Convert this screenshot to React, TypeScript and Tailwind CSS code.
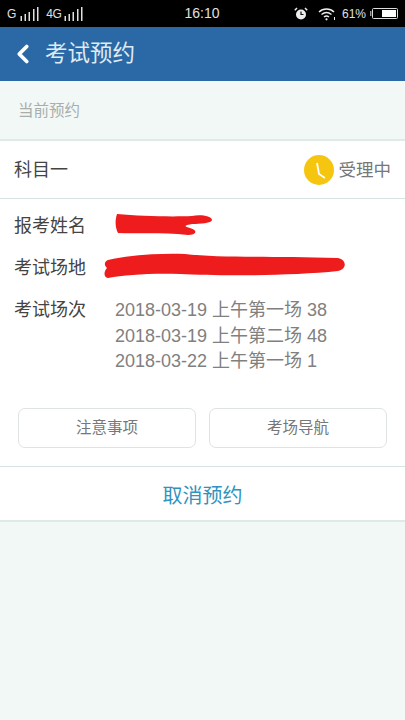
import { ChevronLeft } from 'lucide-react';

const cjk = '"Liberation Sans", "Noto Sans CJK SC", sans-serif';

function Bars() {
  return (
    <svg width="20" height="14" viewBox="0 0 20 14" fill="#e0e0e0">
      <rect x="0.5" y="9" width="1.5" height="5" />
      <rect x="4.5" y="7" width="1.5" height="7" />
      <rect x="8.5" y="5" width="1.5" height="9" />
      <rect x="13" y="2" width="1.5" height="12" />
      <rect x="17" y="0" width="1.5" height="14" />
    </svg>
  );
}

function Alarm() {
  return (
    <svg width="14" height="14" viewBox="0 0 14 14">
      <circle cx="7" cy="7.5" r="5" fill="#eee" />
      <path d="M7 4.5V7.5H9.5" stroke="#111" strokeWidth="1.2" fill="none" />
      <path d="M0.8 3.2L3 1M13.2 3.2L11 1" stroke="#eee" strokeWidth="1.5" />
    </svg>
  );
}

function Wifi() {
  return (
    <svg width="18" height="14" viewBox="0 0 18 14" fill="none" stroke="#eee" strokeWidth="1.4">
      <path d="M1 5C5 1 12 1 16 5" />
      <path d="M3.5 7.5C6.5 5 10.5 5 13.5 7.5" />
      <path d="M6 10C7.5 8.8 9.5 8.8 11 10" />
      <circle cx="8.5" cy="12.3" r="1.1" fill="#eee" stroke="none" />
      <path d="M16.5 10V13" strokeWidth="1" />
    </svg>
  );
}

function Battery() {
  return (
    <svg width="28" height="11" viewBox="0 0 28 11">
      <path d="M0.8 3V8" stroke="#ddd" strokeWidth="1" />
      <rect x="2.5" y="0.5" width="25" height="10" rx="1" fill="none" stroke="#ddd" />
      <rect x="12" y="2" width="14" height="7" fill="#fff" />
    </svg>
  );
}

function StatusBar() {
  return (
    <div className="h-[27px] bg-black flex items-center justify-between pl-[7px] pr-[7px] text-[#e0e0e0]">
      <div className="flex items-center w-[140px]">
        <span className="text-[12px] mr-[4px]">G</span>
        <Bars />
        <span className="text-[12px] ml-[6px] mr-[3px] tracking-[-0.5px]">4G</span>
        <Bars />
      </div>
      <span className="text-[14px] ml-[-1px]">16:10</span>
      <div className="flex items-center w-[140px] justify-end">
        <Alarm />
        <span className="w-[10px]" />
        <Wifi />
        <span className="text-[12px] ml-[6px] mr-[4px]">61%</span>
        <Battery />
      </div>
    </div>
  );
}

function Row({ label, children }: { label: string; children?: React.ReactNode }) {
  return (
    <div className="flex text-[18px] text-[#444] leading-[24px]">
      <span className="w-[101px] shrink-0">{label}</span>
      {children}
    </div>
  );
}

export default function App() {
  return (
    <div className="w-[405px] h-[720px] bg-[#f1f8f6] overflow-hidden" style={{ fontFamily: cjk }}>
      <StatusBar />
      <div className="h-[54px] bg-[#2a69a6] flex items-center text-[#dfeaf4]">
        <ChevronLeft className="w-[30px] h-[30px] ml-[8px] text-white" strokeWidth={3} />
        <span className="text-[22.5px] ml-[7px]">考试预约</span>
      </div>
      <div className="h-[58px] pl-[18px] pt-[2px] flex items-center text-[15.5px] text-[#a9aeac]">当前预约</div>
      <div className="bg-white border-t-2 border-b-2 border-[#dfeae8] h-[383px]">
        <div className="h-[58px] border-b border-[#d8e4e4] pl-[14px] pr-[14px] flex items-center justify-between">
          <span className="text-[18px] text-[#444] mt-[2px]">科目一</span>
          <div className="flex items-center gap-[5px]">
            <svg width="30" height="30" viewBox="0 0 30 30">
              <circle cx="15" cy="15" r="15" fill="#f6c50f" />
              <path d="M13 8L15 19L21 23" stroke="#fff" strokeWidth="1.8" fill="none" />
            </svg>
            <span className="text-[17.5px] text-[#777] mt-[2px]">受理中</span>
          </div>
        </div>
        <div className="pl-[14px] pt-[15px] relative">
          <Row label="报考姓名" />
          <div className="h-[18px]" />
          <Row label="考试场地" />
          <div className="h-[18px]" />
          <Row label="考试场次">
            <div className="text-[#808080] text-[18px] leading-[25.5px]">
              <div>2018-03-19 上午第一场 38</div>
              <div>2018-03-19 上午第二场 48</div>
              <div>2018-03-22 上午第一场 1</div>
            </div>
          </Row>
          <svg className="absolute left-[100px] top-[12px]" width="250" height="72" viewBox="0 0 250 72" fill="#ee1c1c">
            <path d="M17 3C40 5 70 6 92 5C100 3 112 5 112 9C112 12 100 13 92 13C86 14 82 15 90 17C98 19 97 24 88 24C60 21 36 23 18 22C15 16 15 9 17 3Z" />
            <path d="M8 49C30 44 60 42 85 43C120 47 170 45 238 47C247 49 247 58 238 60C190 65 120 65 80 63C50 62 25 64 8 67C3 66 4 60 7 57C4 54 4 51 8 49Z" />
          </svg>
        </div>
        <div className="flex gap-[13px] px-[18px] mt-[33px]">
          <div className="flex-1 h-[40px] rounded-[7px] border border-[#dfe3e3] flex items-center justify-center text-[15.5px] text-[#777]">注意事项</div>
          <div className="flex-1 h-[40px] rounded-[7px] border border-[#dfe3e3] flex items-center justify-center text-[15.5px] text-[#777]">考场导航</div>
        </div>
        <div className="mt-[18px] border-t border-[#d8e4e4] h-[54px] pt-[6px] flex items-center justify-center text-[20px] text-[#2f93bd]">取消预约</div>
      </div>
    </div>
  );
}
